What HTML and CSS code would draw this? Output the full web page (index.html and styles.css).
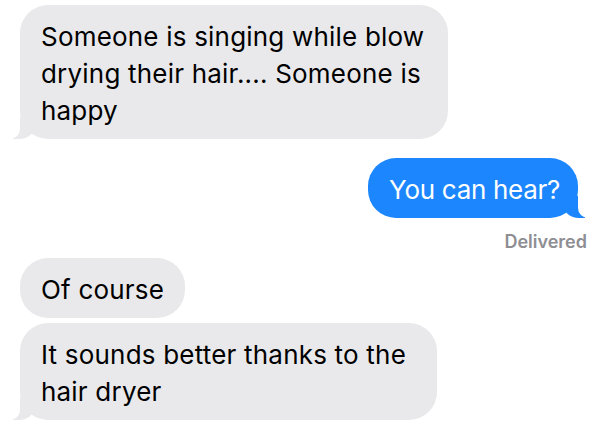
FILE: index.html
```html
<!DOCTYPE html>
<html lang="en">
<head>
  <meta charset="UTF-8" />
  <meta name="viewport" content="width=device-width, initial-scale=1.0"/>
  <title>Messages</title>
  <link rel="stylesheet" href="styles.css">
</head>
<body>
  <div class="thread">
    <div class="bubble in tail wide-1">Someone is singing while blow drying their hair.... Someone is happy</div>

    <div class="bubble out tail">You can hear?</div>
    <div class="status">Delivered</div>

    <div class="bubble in">Of course</div>
    <div class="bubble in tail wide-2 next">It sounds better thanks to the hair dryer</div>
  </div>
</body>
</html>
```

FILE: styles.css
```css
:root {
  --gray-bubble: #e9e9eb;
  --blue-bubble: #1b86fd;
  --status-color: #8e8e93;
}
body {
  margin: 0;
  background: #fff;
  font-family: 'Inter', 'Liberation Sans', sans-serif;
}
.thread {
  display: flex;
  flex-direction: column;
  padding: 5px 22px 0 20px;
}
.bubble {
  position: relative;
  box-sizing: border-box;
  padding: 13px 21px 10px;
  border-radius: 28px;
  font-size: 26px;
  line-height: 37px;
  letter-spacing: 0.2px;
  max-width: 430px;
}
.bubble.in {
  align-self: flex-start;
  background: var(--gray-bubble);
  color: #000;
}
.bubble.out {
  align-self: flex-end;
  background: var(--blue-bubble);
  color: #fff;
  margin-top: 19px;
  letter-spacing: -0.3px;
  padding-right: 18px;
}
.wide-1 { width: 428px; }
.wide-2 { width: 417px; }
.bubble.next { margin-top: 5px; }

/* tails */
.bubble.tail::before,
.bubble.tail::after {
  content: "";
  position: absolute;
  bottom: 0;
  height: 22px;
}
.bubble.in.tail::before {
  left: -7px;
  width: 22px;
  background: var(--gray-bubble);
  border-bottom-right-radius: 16px 14px;
}
.bubble.in.tail::after {
  left: -10px;
  width: 10px;
  background: #fff;
  border-bottom-right-radius: 10px;
}
.bubble.out.tail::before {
  right: -7px;
  width: 22px;
  background: var(--blue-bubble);
  border-bottom-left-radius: 16px 14px;
}
.bubble.out.tail::after {
  right: -10px;
  width: 10px;
  background: #fff;
  border-bottom-left-radius: 10px;
}

.status {
  align-self: flex-end;
  margin: 13px -9px 5px 0;
  font-size: 18px;
  line-height: 22px;
  font-weight: 600;
  color: var(--status-color);
}
```
